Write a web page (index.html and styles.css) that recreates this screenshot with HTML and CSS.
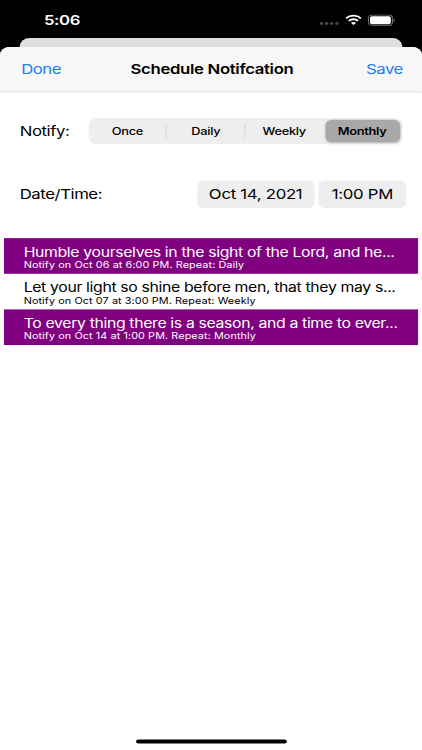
FILE: index.html
```html
<!DOCTYPE html>
<html lang="en">
<head>
    <meta charset="UTF-8">
    <meta name="viewport" content="width=device-width, initial-scale=1.0">
    <title>Schedule Notification</title>
    <link rel="stylesheet" href="styles.css">
</head>
<body>
    <div class="screen">
    <div class="phone">
        <div class="status">
            <span class="clock">5:06</span>
            <div class="indicators">
                <svg class="dots" width="20" height="4" viewBox="0 0 20 4" fill="#4a4a4a">
                    <circle cx="2" cy="2" r="1.8"/>
                    <circle cx="7.2" cy="2" r="1.8"/>
                    <circle cx="12.4" cy="2" r="1.8"/>
                    <circle cx="17.6" cy="2" r="1.8"/>
                </svg>
                <svg class="wifi" width="17" height="13" viewBox="0 0 17 12" preserveAspectRatio="none" fill="none" stroke="#fff" stroke-width="2.1">
                    <path d="M1 4.3C5.2 0.2 11.8 0.2 16 4.3"/>
                    <path d="M3.8 7.2C6.4 4.7 10.6 4.7 13.2 7.2"/>
                    <path d="M8.5 11.9L5.9 9.3C7.3 8 9.7 8 11.1 9.3Z" fill="#fff" stroke="none"/>
                </svg>
                <svg class="battery" width="28" height="14" viewBox="0 0 28 13" preserveAspectRatio="none">
                    <rect x="0.6" y="0.6" width="24.4" height="11.8" rx="3.6" fill="none" stroke="#757575" stroke-width="1.1"/>
                    <rect x="2.2" y="2" width="21.2" height="9" rx="2" fill="#fff"/>
                    <path d="M26.2 4.4V8.6C27.9 7.9 27.9 5.1 26.2 4.4Z" fill="#757575"/>
                </svg>
            </div>
        </div>
        <div class="behind"></div>
        <div class="sheet">
            <div class="navbar">
                <a class="link done">Done</a>
                <h1 class="heading">Schedule Notifcation</h1>
                <a class="link save">Save</a>
            </div>
            <div class="row notify">
                <span class="label">Notify:</span>
                <div class="segments">
                    <span class="segment">Once</span>
                    <span class="segment">Daily</span>
                    <span class="segment">Weekly</span>
                    <span class="segment selected">Monthly</span>
                </div>
            </div>
            <div class="row datetime">
                <span class="label date-label">Date/Time:</span>
                <div class="picker date">Oct 14, 2021</div>
                <div class="picker time">1:00 PM</div>
            </div>
            <div class="list">
                <div class="item purple">
                    <div class="title">Humble yourselves in the sight of the Lord, and he...</div>
                    <div class="detail">Notify on Oct 06 at 6:00 PM. Repeat: Daily</div>
                </div>
                <div class="item">
                    <div class="title">Let your light so shine before men, that they may s...</div>
                    <div class="detail">Notify on Oct 07 at 3:00 PM. Repeat: Weekly</div>
                </div>
                <div class="item purple">
                    <div class="title">To every thing there is a season, and a time to ever...</div>
                    <div class="detail">Notify on Oct 14 at 1:00 PM. Repeat: Monthly</div>
                </div>
            </div>
            <div class="home"></div>
        </div>
    </div>
    </div>
</body>
</html>
```
FILE: styles.css
```css
* {
    box-sizing: border-box;
}
body {
    margin: 0;
    background: #000;
    font-family: Inter, "Liberation Sans", sans-serif;
    color: #000;
}
.screen {
    width: 422px;
    height: 750px;
    overflow: hidden;
}
.phone {
    width: 428px;
    height: 926px;
    display: flex;
    flex-direction: column;
    background: #000;
    transform: scale(0.98598, 0.80994);
    transform-origin: 0 0;
}
.status {
    height: 47px;
    flex: none;
    display: flex;
    justify-content: space-between;
    padding: 15px 27px 0 44.5px;
    color: #fff;
}
.clock {
    font-size: 17px;
    line-height: 20px;
    font-weight: 600;
    letter-spacing: -0.4px;
}
.indicators {
    display: flex;
    align-items: flex-start;
    padding-top: 3px;
}
.dots {
    margin: 9px 6px 0 0;
}
.wifi {
    margin-right: 6px;
}
.behind {
    height: 10.5px;
    flex: none;
    margin: 0 20px;
    background: #dfdfdf;
    border-radius: 10px 10px 0 0;
}
.sheet {
    flex: 1;
    display: flex;
    flex-direction: column;
    background: #fff;
    border-radius: 10px 10px 0 0;
    overflow: hidden;
}
.navbar {
    height: 56px;
    flex: none;
    display: grid;
    grid-template-columns: 1fr auto 1fr;
    align-items: center;
    padding: 0 19.5px 0 21.5px;
    background: #f7f7f7;
    border-bottom: 1px solid #dcdcdc;
}
.link {
    color: #1f7cf0;
    font-size: 17px;
    letter-spacing: -0.5px;
}
.save {
    text-align: right;
}
.heading {
    margin: 0;
    font-size: 17px;
    font-weight: 600;
    letter-spacing: -0.35px;
}
.row {
    display: flex;
    align-items: center;
    padding-left: 20px;
}
.label {
    font-size: 17px;
    letter-spacing: -0.45px;
}
.notify {
    height: 32px;
    margin-top: 32px;
}
.notify .label {
    width: 70px;
}
.segments {
    width: 318px;
    height: 32px;
    display: grid;
    grid-template-columns: repeat(4, 1fr);
    padding: 2px 0;
    background: #eeeeef;
    border-radius: 8px;
}
.segment {
    display: flex;
    align-items: center;
    justify-content: center;
    position: relative;
    padding-right: 1px;
    font-size: 13px;
    font-weight: 500;
    letter-spacing: -0.3px;
}
.segment + .segment:not(.selected)::before {
    content: "";
    position: absolute;
    left: -1.5px;
    top: 5px;
    width: 1px;
    height: 18px;
    background: #d4d4d6;
}
.selected {
    margin: 0 2px 0 1px;
    background: #a9a9a9;
    border-radius: 7px;
    font-weight: 600;
    box-shadow: 0 1px 3px rgba(0, 0, 0, 0.1);
}
.datetime {
    height: 34px;
    margin-top: 45.5px;
}
.date-label {
    width: 179.5px;
}
.picker {
    height: 34px;
    display: flex;
    align-items: center;
    justify-content: center;
    background: #eeeeef;
    border-radius: 7px;
    font-size: 17px;
    letter-spacing: -0.3px;
}
.date {
    width: 119.5px;
    margin-right: 4px;
}
.time {
    width: 89px;
}
.list {
    margin: 37px 4px 0;
}
.item {
    height: 44px;
    padding: 7.5px 0 0 20px;
    white-space: nowrap;
}
.purple {
    background: #800080;
    color: #fff;
}
.title {
    font-size: 16px;
    line-height: 18px;
    letter-spacing: -0.34px;
}
.detail {
    font-size: 11px;
    line-height: 14px;
    letter-spacing: 0.08px;
}
.home {
    width: 153px;
    height: 5px;
    margin: auto auto 8px;
    border-radius: 3px;
    background: #000;
}
```
